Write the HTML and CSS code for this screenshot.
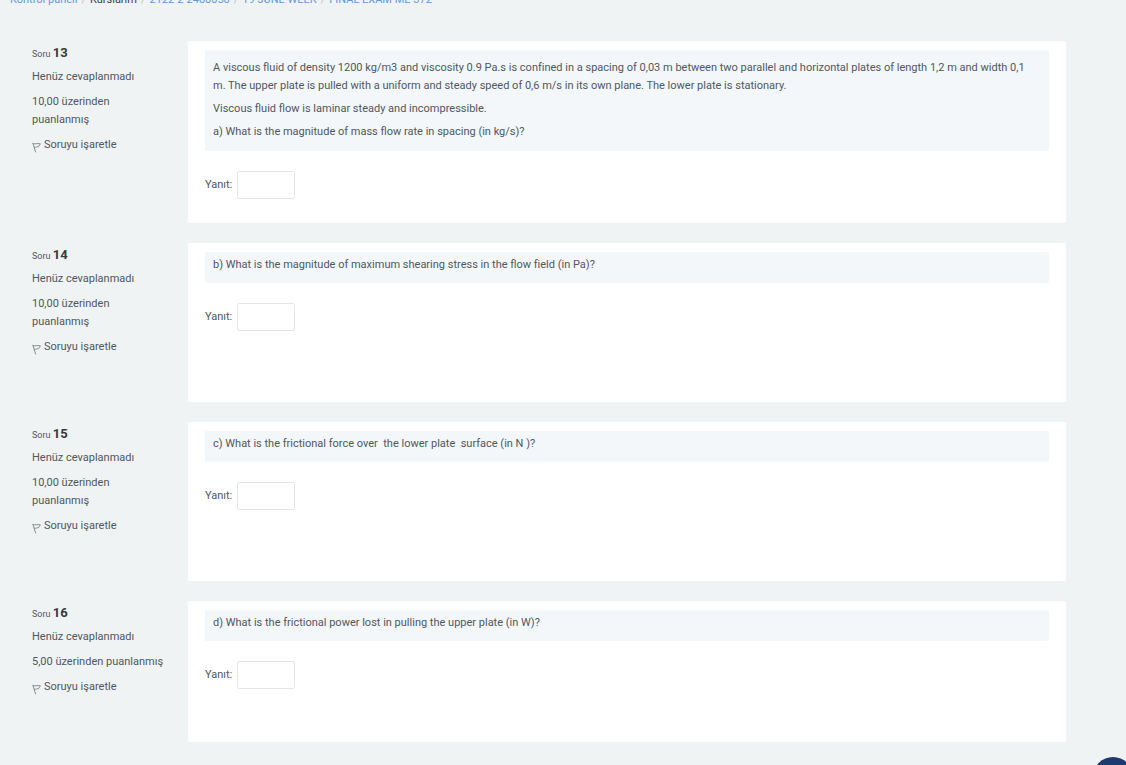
FILE: index.html
```html
<!DOCTYPE html>
<html lang="tr">
<head>
<meta charset="utf-8">
<meta name="viewport" content="width=device-width, initial-scale=1">
<title>FINAL EXAM ME 372</title>
<link rel="stylesheet" href="styles.css">
</head>
<body>
<svg class="sprite" aria-hidden="true">
  <symbol id="flag" viewBox="0 0 9 11">
    <path d="M1 1.5 L3.6 10 M1 1.5 C3 2.6 5 1 8.4 1.8 L6.4 4.8 C4.8 4.4 3.8 5.8 2.2 5.2" fill="none" stroke="currentColor" stroke-linecap="round" stroke-linejoin="round"/>
  </symbol>
</svg>
<nav class="breadcrumb" aria-label="Gezinti">
  <a href="#">Kontrol paneli</a><span class="sep">/</span><span class="current">Kurslarım</span><span class="sep">/</span><a href="#">2122-2-2480058</a><span class="sep">/</span><a href="#">19 JUNE WEEK</a><span class="sep">/</span><a href="#">FINAL EXAM ME 372</a>
</nav>
<main class="quiz">
  <section class="question">
    <div class="info">
      <h3 class="number">Soru <span class="qno">13</span></h3>
      <div class="state">Henüz cevaplanmadı</div>
      <div class="grade">10,00 üzerinden puanlanmış</div>
      <button class="flag" type="button"><svg class="flag-icon" aria-hidden="true"><use href="#flag"/></svg>Soruyu işaretle</button>
    </div>
    <div class="content">
      <div class="formulation paragraphs">
        <p>A viscous fluid of density 1200 kg/m3 and viscosity 0.9 Pa.s is confined in a spacing of 0,03 m between two parallel and horizontal plates of length 1,2 m and width 0,1 m. The upper plate is pulled with a uniform and steady speed of 0,6 m/s in its own plane. The lower plate is stationary.</p>
        <p>Viscous fluid flow is laminar steady and incompressible.</p>
        <p>a) What is the magnitude of mass flow rate in spacing (in kg/s)?</p>
      </div>
      <div class="answer"><label for="q13">Yanıt:</label><input id="q13" type="text"></div>
    </div>
  </section>
  <section class="question">
    <div class="info">
      <h3 class="number">Soru <span class="qno">14</span></h3>
      <div class="state">Henüz cevaplanmadı</div>
      <div class="grade">10,00 üzerinden puanlanmış</div>
      <button class="flag" type="button"><svg class="flag-icon" aria-hidden="true"><use href="#flag"/></svg>Soruyu işaretle</button>
    </div>
    <div class="content">
      <div class="formulation"><p>b) What is the magnitude of maximum shearing stress in the flow field (in Pa)?</p></div>
      <div class="answer"><label for="q14">Yanıt:</label><input id="q14" type="text"></div>
    </div>
  </section>
  <section class="question">
    <div class="info">
      <h3 class="number">Soru <span class="qno">15</span></h3>
      <div class="state">Henüz cevaplanmadı</div>
      <div class="grade">10,00 üzerinden puanlanmış</div>
      <button class="flag" type="button"><svg class="flag-icon" aria-hidden="true"><use href="#flag"/></svg>Soruyu işaretle</button>
    </div>
    <div class="content">
      <div class="formulation"><p>c) What is the frictional force over&nbsp; the lower plate&nbsp; surface (in N )?</p></div>
      <div class="answer"><label for="q15">Yanıt:</label><input id="q15" type="text"></div>
    </div>
  </section>
  <section class="question">
    <div class="info">
      <h3 class="number">Soru <span class="qno">16</span></h3>
      <div class="state">Henüz cevaplanmadı</div>
      <div class="grade">5,00 üzerinden puanlanmış</div>
      <button class="flag" type="button"><svg class="flag-icon" aria-hidden="true"><use href="#flag"/></svg>Soruyu işaretle</button>
    </div>
    <div class="content">
      <div class="formulation"><p>d) What is the frictional power lost in pulling the upper plate (in W)?</p></div>
      <div class="answer"><label for="q16">Yanıt:</label><input id="q16" type="text"></div>
    </div>
  </section>
</main>
<button class="help" type="button" aria-label="Yardım"></button>
</body>
</html>
```
FILE: styles.css
```css
* { box-sizing: border-box; }
body {
  margin: 0;
  background: #eff3f4;
  color: #50575d;
  font: 11px/18px Roboto, "Liberation Sans", sans-serif;
}
.sprite { position: absolute; width: 0; height: 0; }
.breadcrumb {
  display: flex;
  margin-top: -9px;
  padding-left: 10px;
  white-space: nowrap;
}
.breadcrumb a { color: #5e9bdc; text-decoration: none; }
.breadcrumb .current { color: #3c4248; }
.sep { padding: 0 4px; color: #b9c0c5; }
.quiz {
  display: flex;
  flex-direction: column;
  gap: 20px;
  padding: 32px 60px 22px 32px;
}
.question { display: flex; }
.info {
  flex: 0 0 156px;
  padding: 3px 20px 46px 0;
}
.number {
  margin: 0 0 5px;
  font-size: 9px;
  font-weight: 400;
  line-height: 18px;
}
.qno { font-size: 13px; font-weight: 700; color: #343a40; }
.state, .grade { margin-bottom: 7px; }
.flag {
  display: flex;
  align-items: center;
  gap: 3px;
  padding: 0;
  border: 0;
  background: none;
  color: inherit;
  font: inherit;
  white-space: nowrap;
}
.flag-icon { width: 9px; height: 11px; margin-top: 5px; color: #868d92; }
.content {
  flex: 1;
  min-width: 0;
  padding: 9px 17px 24px;
  border-radius: 2px;
  background: #fff;
}
.formulation {
  padding: 4px 16px 9px 8px;
  border-radius: 2px;
  background: #f3f7fa;
}
.formulation.paragraphs { padding-top: 9px; padding-bottom: 10px; }
.formulation p { margin: 0; }
.formulation p + p { margin-top: 5px; }
.answer {
  display: flex;
  align-items: center;
  gap: 5px;
  margin-top: 20px;
}
.answer input {
  width: 58px;
  height: 28px;
  padding: 4px 8px;
  border: 1px solid #e1e6ea;
  border-radius: 2px;
  background: #fff;
  color: inherit;
  font: inherit;
}
.help {
  position: fixed;
  right: -7px;
  bottom: -32px;
  width: 40px;
  height: 40px;
  padding: 0;
  border: 0;
  border-radius: 50%;
  background: #1c3a70;
}
```
